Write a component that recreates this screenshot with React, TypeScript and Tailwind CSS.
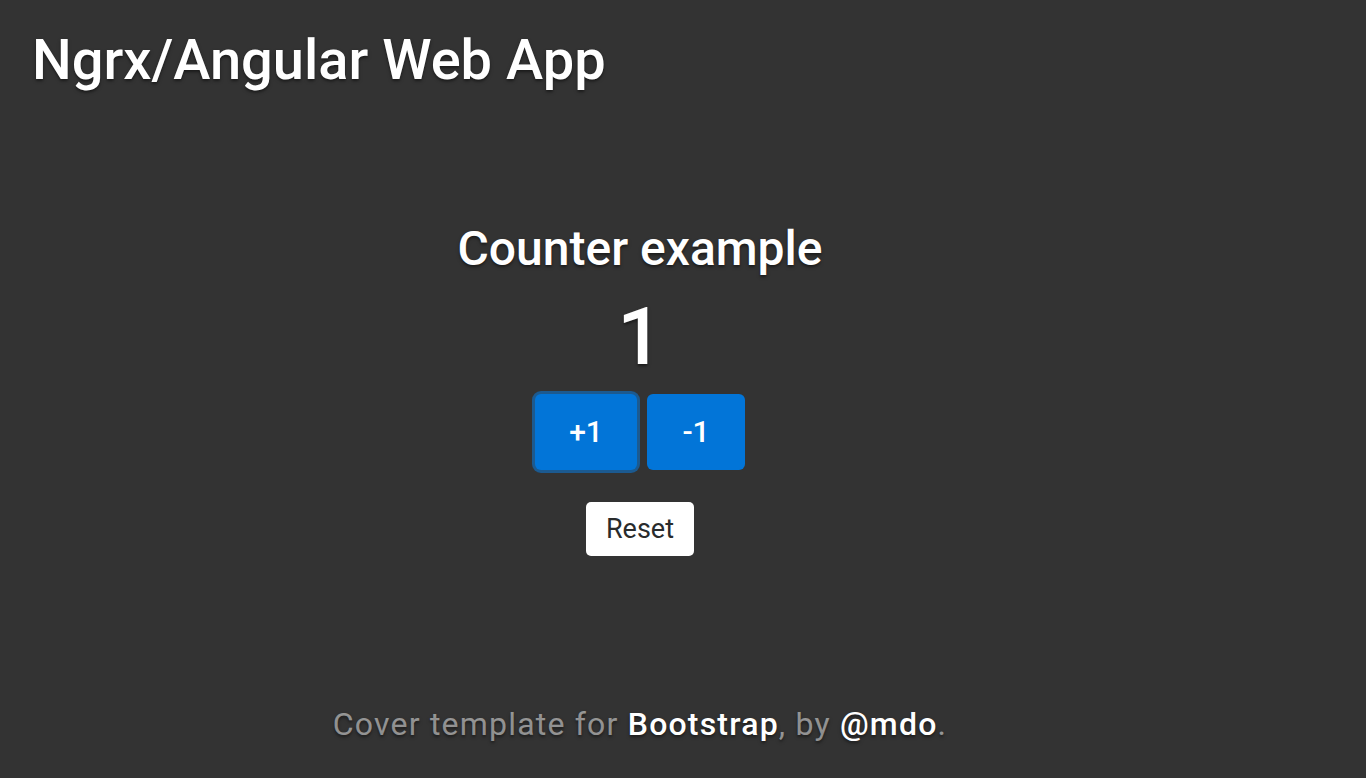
export default function App() {
  return (
    <div className="w-full h-[778px] bg-[#333333] text-white flex flex-col font-['Roboto','Liberation_Sans',Arial,sans-serif] [text-shadow:0_1.6px_3.2px_rgba(0,0,0,0.5)] overflow-hidden">
      <header className="pt-[27px] pl-[32px]">
        <h1 className="text-[56px] leading-[1.2] font-medium">Ngrx/Angular Web App</h1>
      </header>
      <main className="w-[1280px] mt-[126px] flex flex-col items-center">
        <h2 className="text-[48px] leading-[1.2] font-medium">Counter example</h2>
        <div className="mt-[11px] text-[80px] leading-[1.2] font-medium">1</div>
        <div className="mt-[9px] flex gap-[10px]">
          <button className="w-[102px] h-[76px] rounded-[6px] bg-[#0275d8] text-white text-[30px] font-medium shadow-[0_0_0_3px_#1c5a90] [text-shadow:none]">+1</button>
          <button className="w-[98px] h-[76px] rounded-[6px] bg-[#0275d8] text-white text-[30px] font-medium [text-shadow:none]">-1</button>
        </div>
        <button className="mt-[32px] w-[108px] h-[54px] rounded-[5px] bg-white text-[#292b2c] text-[27px] [text-shadow:none]">Reset</button>
      </main>
      <footer className="w-[1280px] mt-[144px] text-center text-[32px] leading-[1.5] tracking-[1.2px] text-[rgba(255,255,255,0.5)]">
        Cover template for <span className="text-white font-medium">Bootstrap</span>, by <span className="text-white font-medium">@mdo</span>.
      </footer>
    </div>
  );
}
